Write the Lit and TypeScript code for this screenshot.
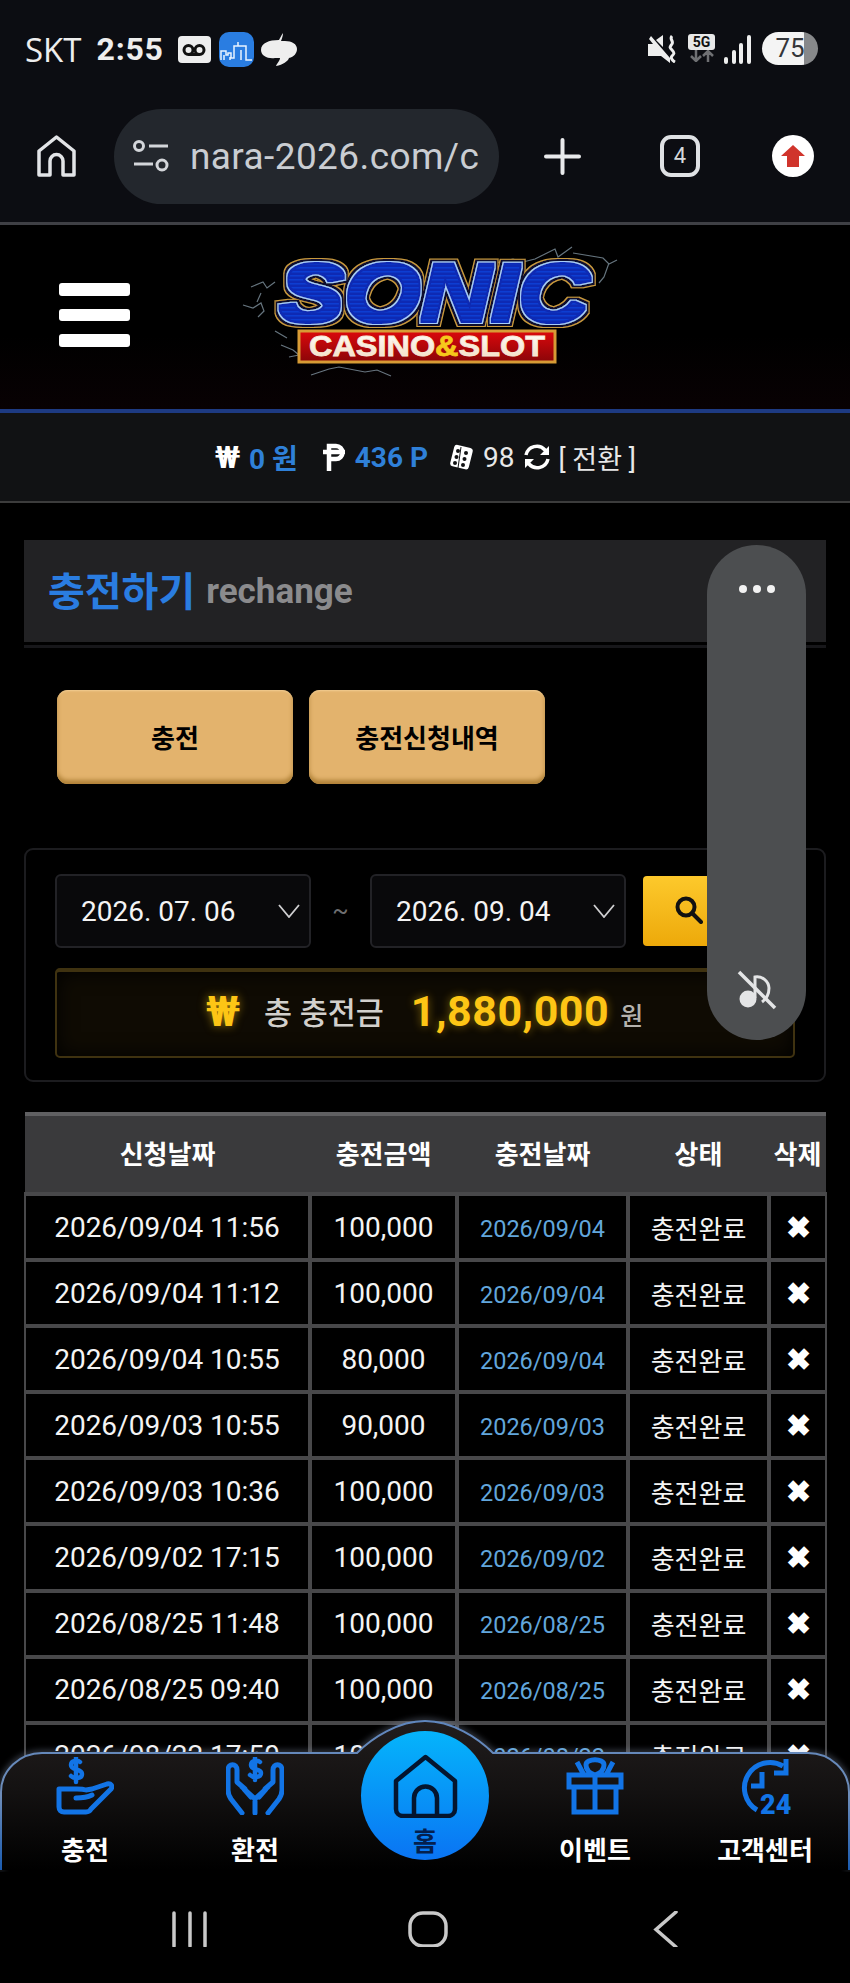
import { LitElement, html, css, svg } from "lit";
import { customElement } from "lit/decorators.js";

const ROWS = [
  ["2026/09/04 11:56", "100,000", "2026/09/04"],
  ["2026/09/04 11:12", "100,000", "2026/09/04"],
  ["2026/09/04 10:55", "80,000", "2026/09/04"],
  ["2026/09/03 10:55", "90,000", "2026/09/03"],
  ["2026/09/03 10:36", "100,000", "2026/09/03"],
  ["2026/09/02 17:15", "100,000", "2026/09/02"],
  ["2026/08/25 11:48", "100,000", "2026/08/25"],
  ["2026/08/25 09:40", "100,000", "2026/08/25"],
  ["2026/08/22 17:50", "100,000", "2026/08/22"],
];

const logo = svg`
<svg class="logo" viewBox="0 0 400 150" width="400" height="150">
  <defs>
    <pattern id="stripes" width="4" height="4" patternUnits="userSpaceOnUse"><rect width="4" height="4" fill="#0a2cb4"/><rect width="4" height="1.500" fill="#0d3cd2"/></pattern>
    <linearGradient id="red" x1="0" y1="0" x2="0" y2="1"><stop offset="0" stop-color="#dc080c"/><stop offset="1" stop-color="#8a0508"/></linearGradient>
    <linearGradient id="cream" x1="0" y1="0" x2="0" y2="1"><stop offset="0" stop-color="#ffffff"/><stop offset="1" stop-color="#f3dcc0"/></linearGradient>
    <filter id="soft"><feGaussianBlur stdDeviation=".7"/></filter>
    <filter id="sonicOutline" x="-5%" y="-20%" width="110%" height="140%">
      <feMorphology in="SourceAlpha" operator="dilate" radius="6" result="d6"/>
      <feMorphology in="SourceAlpha" operator="dilate" radius="5" result="d5"/>
      <feMorphology in="SourceAlpha" operator="dilate" radius="3" result="d3"/>
      <feMorphology in="SourceAlpha" operator="dilate" radius="2" result="d2"/>
      <feFlood flood-color="#c99a3e"/><feComposite in2="d6" operator="in" result="gold"/>
      <feFlood flood-color="#07102e"/><feComposite in2="d5" operator="in" result="navy"/>
      <feFlood flood-color="#a8cdfa"/><feComposite in2="d3" operator="in" result="neon"/>
      <feFlood flood-color="#0a2cb4"/><feComposite in2="d2" operator="in" result="fat"/>
      <feMerge><feMergeNode in="gold"/><feMergeNode in="navy"/><feMergeNode in="neon"/><feMergeNode in="fat"/><feMergeNode in="SourceGraphic"/></feMerge>
    </filter>
  </defs>
  <g fill="none" stroke="#b9d4e6" stroke-width="1.200" filter="url(#soft)" opacity=".55">
    <path d="M18 48l12-5 4 6 8-6M10 66l10 3 8-5 3 8-6 6M28 54l-4 9"/>
    <path d="M262 24l18-4 10 3 12-3 20-10 3 8 14-10M340 14l30 5 6 6 8-4M376 24l-5 14-5 6"/>
    <path d="M48 106l12 5 6 5-10 2M42 92l12 7M78 136l18-6 10-2 26 5 12-2 14 6"/>
  </g>
  <text x="46" y="82" textLength="310" lengthAdjust="spacingAndGlyphs" font-family="'Liberation Sans',Arial,sans-serif" font-weight="700" font-style="italic" font-size="81" fill="url(#stripes)" filter="url(#sonicOutline)">SONIC</text>
  <rect x="66" y="92" width="256" height="31" fill="url(#red)" stroke="#d79b35" stroke-width="3"/>
  <text x="76" y="117" textLength="236" lengthAdjust="spacingAndGlyphs" font-family="'Liberation Sans',Arial,sans-serif" font-weight="700" font-size="30" fill="url(#cream)" stroke="#f8ead8" stroke-width=".8">CASINO<tspan fill="#f6c81c" stroke="#f6c81c">&amp;</tspan>SLOT</text>
</svg>`;

@customElement("app-root")
export class AppRoot extends LitElement {
  static styles = css`
    :host {
      display: block;
      position: relative;
      width: 850px;
      height: 1983px;
      overflow: hidden;
      background: #000;
      color: #fff;
      font-family: Roboto, "Noto Sans CJK KR", "Noto Sans", sans-serif;
    }
    * { box-sizing: border-box; }
    svg { display: block; flex: none; }

    .status { height: 100px; background: #0c0d12; display: flex; justify-content: space-between; padding: 32px 32px 0 25px; }
    .status-l, .status-r { display: flex; align-items: flex-start; }
    .carrier { font-size: 33px; line-height: 35px; color: #eee; font-family: "Open Sans", Roboto, sans-serif; }
    .clock { font-size: 32px; line-height: 35px; font-weight: 700; color: #eee; margin-left: 15px; margin-right: 14px; letter-spacing: .8px; }
    .vm { width: 33px; height: 27px; margin-top: 4px; background: #eee; border-radius: 4px; display: flex; align-items: center; justify-content: center; margin-right: 8px; }
    .app { width: 35px; height: 35px; background: #2a7de1; border-radius: 10px; display: flex; align-items: center; justify-content: center; margin-right: 7px; }
    .chat { margin-top: 1px; }
    .status-r .mute { margin: 3px 10px 0 0; }
    .five { width: 27px; margin: 2px 9px 0 0; display: flex; flex-direction: column; align-items: center; }
    .five b { display: block; width: 27px; height: 16px; border-radius: 3px; background: #e8e8e8; color: #111; font: 700 14px/16px Roboto, sans-serif; text-align: center; }
    .batt { width: 56px; height: 33px; border-radius: 17px; margin: 0 0 0 11px; background: linear-gradient(90deg, #f4f4f4 0 75%, #87888a 75%); color: #34363a; font-size: 26px; line-height: 33px; text-align: center; }

    .toolbar { height: 122px; background: #0c0d12; display: flex; align-items: center; padding: 0 36px 10px 37px; }
    .url { width: 385px; height: 95px; border-radius: 48px; background: #23272d; margin-left: 38px; margin-right: 45px; display: flex; align-items: center; padding-left: 19px; overflow: hidden; }
    .url span { font-size: 37px; color: #c9cdd2; margin-left: 21px; white-space: nowrap; letter-spacing: .4px; }
    .plus { margin-right: 79px; }
    .tabs { width: 40px; height: 42px; border: 4px solid #dfe1e4; border-radius: 11px; text-align: center; font-size: 22px; line-height: 34px; color: #d6d8db; margin-right: 72px; }
    .up { width: 42px; height: 42px; border-radius: 50%; background: #fff; display: flex; align-items: center; justify-content: center; }

    .rule { height: 3px; background: #3f4045; }

    .site { height: 184px; position: relative; background: linear-gradient(#000 60%, #080103); }
    .burger { position: absolute; left: 59px; top: 58px; width: 71px; display: flex; flex-direction: column; gap: 13px; }
    .burger i { display: block; height: 12.500px; background: #fff; border-radius: 3px; }
    .logo { position: absolute; left: 233px; top: 14px; }
    .site-line { height: 4px; background: #1d3a82; }

    .balance { height: 90px; background: #111214; display: flex; align-items: center; font-size: 28px; border-bottom: 2px solid #3c3c3c; padding-left: 215px; }
    .won { font-weight: 700; font-size: 31px; width: 34px; line-height: 1; }
    .blue { color: #2f80d8; font-weight: 700; }
    .bal-pt { margin-left: 25px; margin-right: 10px; }
    .bal-dice { margin-left: 20px; margin-right: 9px; }
    .bal-ref { margin: 0 8px 0 10px; }
    .num98 { color: #e8e8e8; font-size: 28px; }
    .conv { color: #e8e8e8; font-size: 27px; white-space: pre; }

    main { padding: 37px 24px 0; }
    .title { height: 102px; background: #222224; display: flex; align-items: center; padding: 0 0 4px 24px; }
    .title b { color: #2a7de1; font-size: 40px; font-weight: 700; }
    .title span { color: #8b8b8d; font-size: 35px; font-weight: 700; margin-left: 11px; margin-top: 4px; }
    .title-rule { height: 3px; margin-top: 3px; background: #17171a; }

    .btns { display: flex; gap: 16px; padding: 42px 0 0 33px; }
    .btn { width: 236px; height: 94px; border-radius: 11px; background: #e3b36d; color: #000; font-size: 26px; font-weight: 700; display: flex; align-items: center; justify-content: center; box-shadow: inset 0 -4px 4px #b08238, inset 0 1px 2px #f3cf96; padding-bottom: 2px; }

    .panel { margin-top: 64px; height: 234px; border: 2px solid #1c1c1f; border-radius: 9px; padding: 24px 29px; }
    .search { display: flex; align-items: center; }
    .sel { width: 256px; height: 74px; background: #09090b; border: 2px solid #222226; border-radius: 6px; display: flex; align-items: center; justify-content: space-between; padding: 0 9px 0 24px; font-size: 28px; color: #f4f4f4; white-space: pre; }
    .tilde { width: 59px; text-align: center; color: #6e6e70; font-size: 24px; }
    .go { width: 100px; height: 70px; margin-left: 17px; border-radius: 4px; background: linear-gradient(#fdc92c, #eda90a); display: flex; padding: 20px 0 0 32px; }
    .total { margin-top: 20px; height: 90px; width: 740px; border: 2px solid #3f3210; border-top-width: 4px; border-radius: 5px; background: #0f0b03; box-shadow: inset 0 0 20px #000; display: flex; align-items: center; padding: 0 0 6px 149px; }
    .t-won { color: #fdc515; font-size: 42px; font-weight: 700; width: 58px; text-shadow: 0 0 10px rgba(253,197,21,.55); }
    .t-lbl { color: #d2d0cc; font-size: 30.500px; font-weight: 500; margin-right: 27px; }
    .t-amt { color: #fdc515; font-size: 43px; font-weight: 700; letter-spacing: .5px; text-shadow: 0 0 10px rgba(253,197,21,.45); }
    .t-unit { color: #b5b3ae; font-size: 25px; font-weight: 500; margin-left: 11px; margin-top: 6px; }

    table { margin-top: 30px; width: 801px; border-collapse: collapse; table-layout: fixed; }
    th { height: 80px; background: #3a3a3c; border-top: 4px solid #606062; border-bottom: 2px solid #1b1b1d; color: #fff; font-size: 26px; font-weight: 700; padding: 0 0 4px; white-space: nowrap; }
    td { height: 66.100px; background: #000; border: 4px solid #48484a; text-align: center; font-size: 28px; color: #f4f4f4; padding: 0; white-space: nowrap; }
    td:first-child { border-left-width: 2px; }
    td:last-child { border-right-width: 2px; }
    td.d { color: #62a6dc; font-size: 23.500px; padding-top: 3px; }
    td.s { font-size: 26px; }
    td.x { font-size: 30px; color: #fff; font-weight: 900; }

    .pill { position: absolute; left: 707px; top: 545px; width: 99px; height: 495px; border-radius: 50px; background: #4c4e50; display: flex; flex-direction: column; justify-content: space-between; align-items: center; padding: 40px 0 30px; }
    .dots { display: flex; gap: 6px; }
    .dots i { width: 8px; height: 8px; background: #f2f2f2; border-radius: 50%; }

    .dock { position: absolute; left: 0; top: 1712px; width: 850px; height: 271px; background: linear-gradient(transparent 158px, #000 158px); }
    .dock-bg { position: absolute; left: 0; top: 0; }
    .tabsbar { position: absolute; left: 0; top: 40px; width: 850px; height: 118px; display: grid; grid-template-columns: repeat(5, 1fr); }
    .item { display: flex; flex-direction: column; align-items: center; padding-top: 5px; }
    .item span { margin-top: 20px; font-size: 26px; line-height: 32px; font-weight: 700; color: #fff; white-space: nowrap; }
    .home { position: absolute; left: 361px; top: -21px; width: 128px; height: 129px; border-radius: 50%; background: linear-gradient(#05b4fb, #0a74f3); display: flex; flex-direction: column; align-items: center; padding-top: 23px; }
    .item .home span { color: #04204e; font-size: 26px; line-height: 30px; margin-top: 9px; }
    .sys { position: absolute; left: 0; top: 199px; width: 850px; height: 36px; }
  `;

  render() {
    return html`
      <div class="status">
        <div class="status-l">
          <span class="carrier">SKT</span><span class="clock">2:55</span>
          <div class="vm"><svg width="24" height="14" viewBox="0 0 24 14" fill="none" stroke="#111" stroke-width="3"><circle cx="6.500" cy="7" r="4.500"/><circle cx="17.500" cy="7" r="4.500"/><path d="M6.500 11.500h11"/></svg></div>
          <div class="app"><svg width="33" height="24" viewBox="0 0 33 24" fill="none" stroke="#e9f3ff" stroke-width="1.500"><path d="M1 22v-9h5v4h2v-2h3v5h3V8h4V4M18 8h8v14h6M4 22v-5M10 22v-3M21 12v10"/></svg></div>
          <svg class="chat" width="36" height="33" viewBox="0 0 36 33" fill="#eee"><path d="M22 0c-2 3-3 5-4 7C8 7 0 10 0 17c0 6 7 9 14 8h5c0 3-3 5-4 8 7-1 12-5 13-8 5-1 8-5 8-9 0-5-5-8-12-8h-4c1-3 2-5 2-8z"/></svg>
        </div>
        <div class="status-r">
          <svg class="mute" width="30" height="28" viewBox="0 0 30 28" fill="#eee"><path d="M0 9h5L1 4l2-3 19 22v5l-9-7H0zM8 5l7-5v12z"/><path d="M24 1c-3 3 2 5 0 8s-3 3 0 6 2 4 0 6 1 5 3 6" fill="none" stroke="#eee" stroke-width="3"/></svg>
          <div class="five"><b>5G</b><svg width="24" height="12" viewBox="0 0 24 12" fill="none" stroke="#6f7073" stroke-width="2.500"><path d="M6 0v10M1 6l5 5 5-5M18 12V2M13 6l5-5 5 5"/></svg></div>
          <svg width="27" height="30" viewBox="0 0 27 30" fill="#eee" style="margin-top:3px"><rect x="0" y="22" width="4" height="7" rx="2"/><rect x="8" y="15" width="4" height="14" rx="2"/><rect x="15" y="8" width="4" height="21" rx="2"/><rect x="23" y="0" width="4" height="29" rx="2"/></svg>
          <div class="batt">75</div>
        </div>
      </div>

      <div class="toolbar">
        <svg width="39" height="42" viewBox="0 0 39 42" fill="none" stroke="#e2e4e7" stroke-width="3.500" stroke-linejoin="round"><path d="M2 40V16L19.500 2 37 16v24H26V26a6.500 6.500 0 0 0-13 0v14z"/></svg>
        <div class="url">
          <svg width="36" height="32" viewBox="0 0 36 32" fill="none" stroke="#d3d6da" stroke-width="3"><circle cx="6" cy="6" r="4.500"/><path d="M16 6h19M1 24h19"/><circle cx="29" cy="25" r="5"/></svg>
          <span>nara-2026.com/c</span>
        </div>
        <svg class="plus" width="37" height="37" viewBox="0 0 37 37" stroke="#e9eaec" stroke-width="4" stroke-linecap="round"><path d="M18.500 2v33M2 18.500h33"/></svg>
        <div class="tabs">4</div>
        <div class="up"><svg width="24" height="22" viewBox="0 0 24 22" fill="#d0342c"><path d="M12 0l12 11h-6v11H6V11H0z"/></svg></div>
      </div>
      <div class="rule"></div>

      <div class="site">
        <div class="burger"><i></i><i></i><i></i></div>
        ${logo}
      </div>
      <div class="site-line"></div>

      <div class="balance">
        <span class="won">₩</span><span class="blue">0 원</span>
        <svg class="bal-pt" width="22" height="28" viewBox="0 0 22 28" fill="none" stroke="#fff" stroke-width="4.500"><path d="M6 28V3h7a6.500 6.500 0 0 1 0 13H6M0 9h22"/></svg>
        <span class="blue">436 P</span>
        <svg class="bal-dice" width="26" height="26" viewBox="0 0 26 26"><rect x="4" y="2" width="19" height="22" rx="3" fill="#fff" transform="rotate(14 13 13)"/><g fill="#111214"><circle cx="10" cy="7" r="2"/><circle cx="18" cy="9" r="2"/><circle cx="8.500" cy="13" r="2"/><circle cx="16.500" cy="15" r="2"/><circle cx="7" cy="19" r="2"/><circle cx="15" cy="21" r="2"/></g><path d="M13 3L10 24" stroke="#111214" stroke-width="1"/></svg>
        <span class="num98">98</span>
        <svg class="bal-ref" width="26" height="26" viewBox="0 0 26 26" fill="none" stroke="#fff" stroke-width="3.500"><path d="M2 11a11 11 0 0 1 19-5l3 3M24 15a11 11 0 0 1-19 5l-3-3"/><path d="M25 2v9h-9zM1 24v-9h9z" fill="#fff" stroke="none"/></svg>
        <span class="conv">[ 전환 ]</span>
      </div>

      <main>
        <div class="title"><b>충전하기</b><span>rechange</span></div>
        <div class="title-rule"></div>
        <div class="btns"><div class="btn">충전</div><div class="btn">충전신청내역</div></div>

        <div class="panel">
          <div class="search">
            <div class="sel">2026. 07. 06 ${this.chev()}</div>
            <span class="tilde">~</span>
            <div class="sel">2026. 09. 04 ${this.chev()}</div>
            <div class="go"><svg width="28" height="28" viewBox="0 0 28 28" fill="none" stroke="#111" stroke-width="4"><circle cx="11" cy="11" r="8.500"/><path d="M17 17l9 9" stroke-linecap="round"/></svg></div>
          </div>
          <div class="total">
            <span class="t-won">₩</span><span class="t-lbl">총 충전금</span><span class="t-amt">1,880,000</span><span class="t-unit">원</span>
          </div>
        </div>

        <table>
          <colgroup><col style="width:285px"/><col style="width:147px"/><col style="width:171px"/><col style="width:141px"/><col style="width:57px"/></colgroup>
          <thead><tr><th>신청날짜</th><th>충전금액</th><th>충전날짜</th><th>상태</th><th>삭제</th></tr></thead>
          <tbody>
            ${ROWS.map((r) => html`<tr><td>${r[0]}</td><td>${r[1]}</td><td class="d">${r[2]}</td><td class="s">충전완료</td><td class="x">✖</td></tr>`)}
          </tbody>
        </table>
      </main>

      <div class="pill">
        <div class="dots"><i></i><i></i><i></i></div>
        <svg width="40" height="40" viewBox="0 0 40 40" fill="none"><circle cx="11" cy="29" r="8.500" fill="#e4e5e6"/><path d="M18 28V7a12 12 0 0 1 14 11c0 6-3 11-7 14" stroke="#e4e5e6" stroke-width="3"/><path d="M2 2l36 36" stroke="#e4e5e6" stroke-width="3.500"/></svg>
      </div>

      <div class="dock">
        <svg class="dock-bg" width="850" height="160" viewBox="0 0 850 160">
          <defs>
            <linearGradient id="dockfill" x1="0" y1="0" x2="0" y2="1"><stop offset="0" stop-color="#211d1d"/><stop offset=".45" stop-color="#141212"/><stop offset="1" stop-color="#000"/></linearGradient>
            <linearGradient id="dockline" x1="0" y1="0" x2="0" y2="1"><stop offset="0" stop-color="#5f86bd"/><stop offset=".5" stop-color="#6d8cb8"/><stop offset="1" stop-color="#1a5bb0"/></linearGradient>
            <filter id="glow" x="-5%" y="-20%" width="110%" height="140%"><feGaussianBlur stdDeviation="3"/></filter>
          </defs>
          <path d="M1 158V80C1 58 20 41 42 41H357C372 26 398 9 425 9C452 9 478 26 493 41H808C830 41 849 58 849 80V158" fill="none" stroke="#a8b8d8" stroke-opacity=".45" stroke-width="4" filter="url(#glow)"/>
          <path d="M1 158V80C1 58 20 41 42 41H357C372 26 398 9 425 9C452 9 478 26 493 41H808C830 41 849 58 849 80V158Z" fill="url(#dockfill)"/>
          <path d="M1 158V80C1 58 20 41 42 41H357C372 26 398 9 425 9C452 9 478 26 493 41H808C830 41 849 58 849 80V158" fill="none" stroke="url(#dockline)" stroke-width="2"/>
        </svg>
        <div class="tabsbar">
          <div class="item">
            <svg width="58" height="58" viewBox="0 0 58 58" fill="none" stroke="#1274e6" stroke-width="5" stroke-linejoin="round" stroke-linecap="round"><path d="M24 5c-2-2-9-2-9 3 0 6 11 3 11 9 0 5-8 5-11 2M20 1v24" stroke-width="4.500"/><path d="M3 32h18c6 0 9 1 9 1l6-1 15-5c4-1 6 2 4 5L35 52c-1 2-3 3-5 3H8c-3 0-5-2-5-5zM20 41c6 0 10 0 16-3"/></svg>
            <span>충전</span>
          </div>
          <div class="item">
            <svg width="58" height="58" viewBox="0 0 58 58" fill="none" stroke="#1274e6" stroke-width="5" stroke-linecap="round" stroke-linejoin="round"><path d="M34 5c-2-2-9-2-9 3 0 6 10 3 10 8 0 5-8 5-11 2M29 1v22" stroke-width="4.500"/><path d="M16 56L5 42c-2-3-3-5-3-9V13c0-7 9-7 9 0v12l8 7M42 56l11-14c2-3 3-5 3-9V13c0-7-9-7-9 0v12l-8 7M18 32l7 8M40 32l-7 8M16 30l13 12 13-12M29 42v14"/></svg>
            <span>환전</span>
          </div>
          <div class="item">
            <div class="home">
              <svg width="65" height="64" viewBox="0 0 65 64" fill="none" stroke="#04152f" stroke-width="4.500" stroke-linejoin="round"><path d="M3 27L32.500 3 62 27v28c0 4-3 7-7 7H10c-4 0-7-3-7-7zM21 62V44a11.500 11.500 0 0 1 23 0v18"/></svg>
              <span>홈</span>
            </div>
          </div>
          <div class="item">
            <svg width="58" height="58" viewBox="0 0 58 58" fill="none" stroke="#1274e6" stroke-width="5"><path d="M3 18h52v12H3zM8 30v25h42V30M29 18v37M29 18c-6-2-9-6-9-10 0-7 18-7 18 0 0 4-3 8-9 10zM18 18L11 5M40 18l7-13"/></svg>
            <span>이벤트</span>
          </div>
          <div class="item">
            <svg width="58" height="58" viewBox="0 0 58 58" fill="none" stroke="#1274e6" stroke-width="5"><path d="M21 53A25 25 0 0 1 47 9M50 2v14H38M26 15v14H15"/><text x="24" y="57" font-family="Roboto,sans-serif" font-weight="900" font-size="27" fill="#1274e6" stroke="none">24</text></svg>
            <span>고객센터</span>
          </div>
        </div>
        <svg class="sys" width="850" height="36" viewBox="0 0 850 36" fill="none" stroke="#c9c9c9" stroke-width="3.500" stroke-linecap="round"><path d="M174 2v33M190 2v33M205 2v33"/><rect x="410" y="2" width="36" height="33" rx="13"/><path d="M676 1L656 18.500 676 36"/></svg>
      </div>
    `;
  }

  chev() {
    return svg`<svg width="22" height="14" viewBox="0 0 22 14" fill="none" stroke="#cfcfd1" stroke-width="1.800"><path d="M1 1l10 12L21 1"/></svg>`;
  }
}
